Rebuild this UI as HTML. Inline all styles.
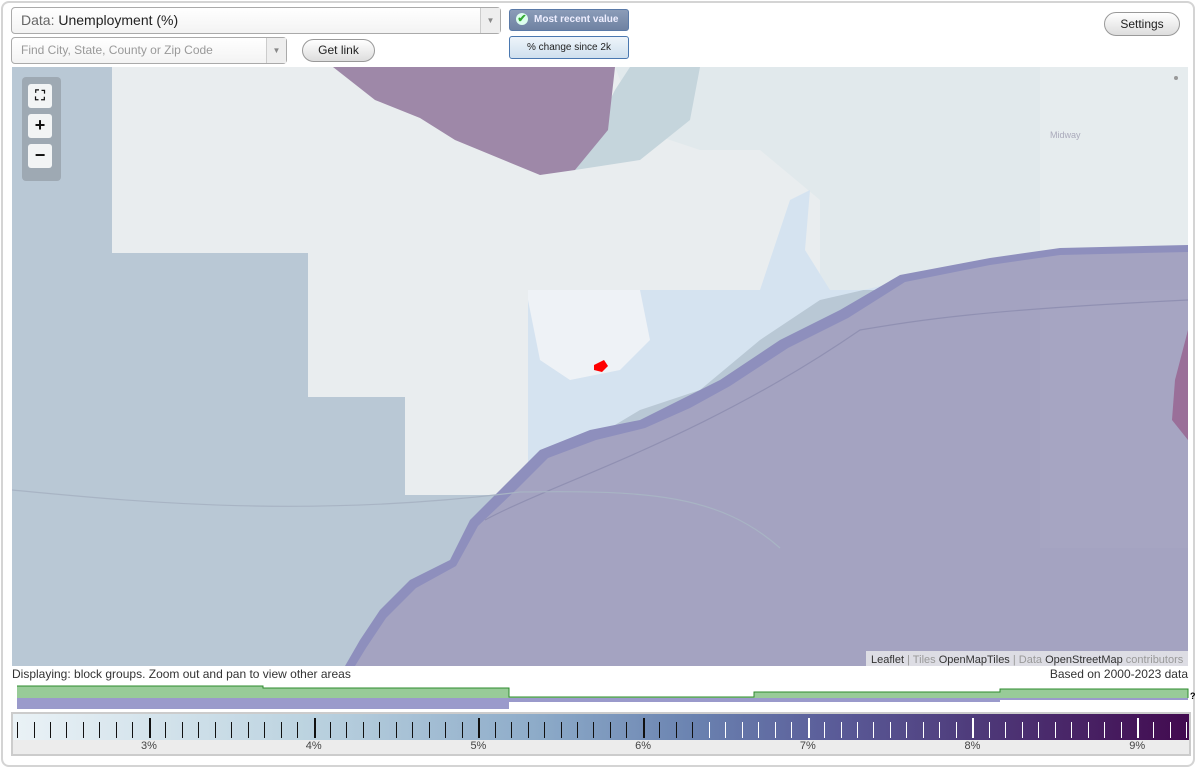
<!DOCTYPE html>
<html><head><meta charset="utf-8"><style>
body{margin:0;width:1200px;height:771px;background:#fff;font-family:"Liberation Sans",Arial,sans-serif;position:relative;overflow:hidden}
.frame{position:absolute;left:1px;top:1px;width:1194px;height:766px;border:2px solid #d4d4d4;border-radius:8px;box-sizing:border-box}
.abs{position:absolute}
.sel{border:1px solid #aaa;border-radius:4px;background:linear-gradient(#fff,#f3f3f3);box-sizing:border-box}
.arrow{position:absolute;right:0;top:0;bottom:0;width:19px;border-left:1px solid #ccc;background:#eee;color:#888;font-size:8px;text-align:center}
.btn{border:1px solid #999;border-radius:12px;background:linear-gradient(#fff,#ddd);font-size:12px;color:#222;text-align:center;box-sizing:border-box}
.zb{position:absolute;left:6px;width:24px;height:24px;background:#f2f4f5;border-radius:3px;text-align:center;font-weight:bold;font-size:18px;line-height:23px;color:#111}
.tick{position:absolute;top:722px;width:1px;height:16px;background:#111}
.maj{top:718px;height:20px;width:2px}
.lab{position:absolute;top:740px;font-size:11px;color:#444;width:30px;margin-left:-15px;text-align:center}
</style></head><body>
<div class="frame"></div>
<div class="abs sel" style="left:11px;top:7px;width:490px;height:27px;font-size:14px;line-height:25px;padding-left:9px;color:#222"><span style="color:#666">Data:</span> Unemployment (%)<div class="arrow" style="line-height:25px">▼</div></div>
<div class="abs sel" style="left:11px;top:37px;width:276px;height:27px;font-size:12px;line-height:25px;padding-left:9px;color:#999">Find City, State, County or Zip Code<div class="arrow" style="line-height:25px">▼</div></div>
<div class="abs btn" style="left:302px;top:39px;width:73px;height:23px;line-height:21px">Get link</div>
<div class="abs" style="left:509px;top:9px;width:120px;height:22px;border:1px solid #5a7aa8;border-radius:3px;background:linear-gradient(#8b9cb8,#6f82a2);color:#eef;font-size:10px;font-weight:bold;line-height:20px;box-sizing:border-box;padding-left:24px">Most recent value<span style="position:absolute;left:6px;top:3px;width:12px;height:12px;border-radius:6px;background:#dfe;color:#3a3;font-size:11px;line-height:12px;text-align:center">✔</span></div>
<div class="abs" style="left:509px;top:36px;width:120px;height:23px;border:1px solid #4a78b0;border-radius:3px;background:linear-gradient(#eef4fa,#cfe0ee);font-size:10px;line-height:21px;text-align:center;color:#222;box-sizing:border-box">% change since 2k</div>
<div class="abs btn" style="left:1104px;top:12px;width:76px;height:24px;line-height:22px">Settings</div>

<svg class="abs" style="left:12px;top:67px" width="1176" height="599" viewBox="12 67 1176 599">
<rect x="12" y="67" width="1176" height="599" fill="#b9c8d5"/>
<polygon points="112,67 1188,67 1188,290 528,290 528,495 405,495 405,397 308,397 308,253 112,253" fill="#e9edef"/>
<polygon points="615,67 1040,67 1040,290 820,290 820,200 760,150 700,150 640,130" fill="#e1e9ec"/>
<polygon points="1040,67 1188,67 1188,290 1040,290" fill="#e6ecee"/>
<polygon points="575,170 615,90 630,67 700,67 690,120 640,160" fill="#c5d5dc"/>
<polygon points="528,290 760,290 790,200 810,190 805,250 830,290 1040,290 1000,262 950,270 820,300 760,340 700,390 640,410 590,440 545,465 528,470" fill="#d5e3f0"/>
<polygon points="528,290 640,290 650,340 620,370 570,380 540,360 528,300" fill="#eef2f6"/>
<polygon points="333,67 615,67 608,130 575,170 540,175 455,140 420,118 375,100" fill="#9e88a8"/>
<polygon points="1188,245 1060,248 990,258 900,275 840,310 780,340 720,380 680,400 640,420 590,430 540,450 510,480 470,520 450,560 410,580 380,610 360,640 345,666 1188,666" fill="#8e8fbd"/>
<polygon points="1188,252 1060,255 990,265 905,282 848,318 788,348 730,386 690,408 645,428 596,440 548,458 518,488 478,526 456,566 416,588 386,618 366,648 355,666 1188,666" fill="#a4a3c1"/>
<polygon points="1188,290 1040,290 1040,548 1188,548" fill="#a8a7c3" opacity="0.6"/>
<polygon points="1175,380 1188,330 1188,440 1172,420" fill="#9a6f99"/>
<path d="M485,520 C560,480 700,440 860,330 C920,320 980,310 1188,300" stroke="#9090b2" stroke-width="1.2" fill="none"/>
<path d="M12,490 C120,500 300,520 520,492 C650,490 720,495 780,548" stroke="#a8b4c4" stroke-width="1.2" fill="none"/>
<polygon points="594,365 604,360 608,366 602,372 594,370" fill="#f00"/>
<rect x="866" y="651" width="322" height="15" fill="#e8e8ea" opacity="0.85"/>
<text x="871" y="663" font-size="11" fill="#333" font-family="Liberation Sans">Leaflet <tspan fill="#999">| Tiles </tspan>OpenMapTiles<tspan fill="#999"> | Data </tspan>OpenStreetMap<tspan fill="#999"> contributors</tspan></text>
<text x="1050" y="138" font-size="9" fill="#aab">Midway</text>
<circle cx="1176" cy="78" r="2" fill="#999"/>
</svg>
<div class="abs" style="left:22px;top:77px;width:39px;height:104px;background:#9ea9b3;border-radius:4px">
<div class="zb" style="top:7px;font-size:14px">⛶</div>
<div class="zb" style="top:37px">+</div>
<div class="zb" style="top:67px">−</div>
</div>
<div class="abs" style="left:12px;top:667px;font-size:12px;color:#333">Displaying: block groups. Zoom out and pan to view other areas</div>
<div class="abs" style="right:12px;top:667px;font-size:12px;color:#333">Based on 2000-2023 data</div>

<svg class="abs" style="left:0;top:680px" width="1200" height="32">
<rect x="17" y="18" width="246" height="11" fill="#9a9acb"/><rect x="263" y="18" width="246" height="11" fill="#9a9acb"/>
<rect x="509" y="18" width="491" height="4" fill="#9a9acb"/><rect x="1000" y="18" width="188" height="2" fill="#9a9acb"/>
<polygon points="17,6 263,6 263,8 509,8 509,17 754,17 754,12 1000,12 1000,9 1188,9 1188,18 17,18" fill="#98cb98"/>
<polyline points="17,6 263,6 263,8 509,8 509,17 754,17 754,12 1000,12 1000,9 1188,9 1188,18" stroke="#2e8b2e" stroke-width="1" fill="none"/>
<text x="1190" y="19" font-size="9" font-weight="bold">?</text>
</svg>
<div class="abs" style="left:11px;top:712px;width:1180px;height:44px;border:2px solid #ccc;box-sizing:border-box;background:#ececec"></div>
<div class="abs" style="left:13px;top:714px;width:1176px;height:26px;background:linear-gradient(90deg,#eaf2f6,#bcd3e0 25%,#8caac8 45%,#6a82b0 58%,#5a5b98 70%,#4e3a7a 82%,#420a4f)"></div>
<div id="t"></div>
<script>
var h='';for(var i=0;i<72;i++){var x=17+i*16.47;if(x>1188)break;var m=(i%10==8);var c=x>700?'#fff':'#111';h+='<div class="tick'+(m?' maj':'')+'" style="left:'+x.toFixed(1)+'px;background:'+c+'"></div>';}
var L=['3%','4%','5%','6%','7%','8%','9%'];for(var j=0;j<7;j++){h+='<div class="lab" style="left:'+(149+j*164.7).toFixed(1)+'px">'+L[j]+'</div>';}
document.getElementById('t').innerHTML=h;
</script>
</body></html>
